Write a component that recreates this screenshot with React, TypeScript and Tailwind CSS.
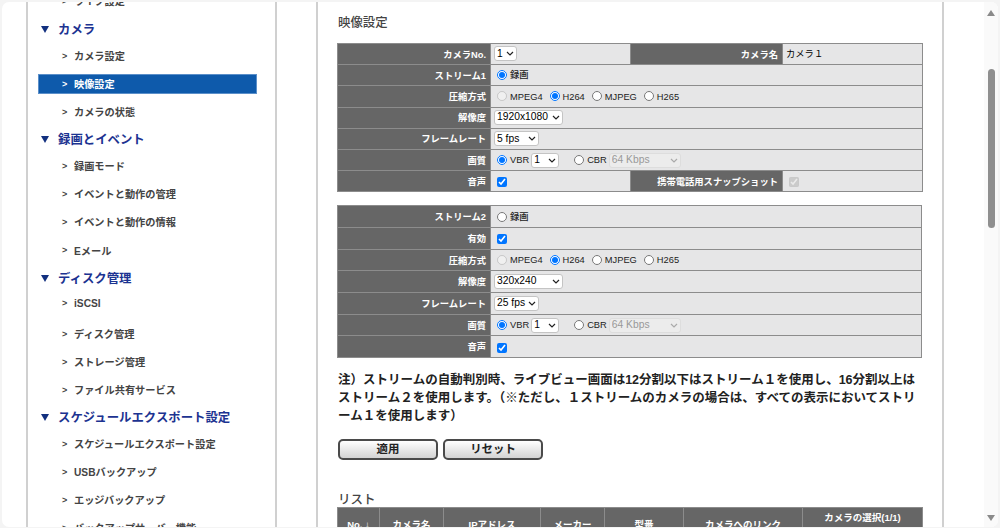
import React from "react";

const FONT = "[font-family:'Liberation_Sans','Noto_Sans_CJK_JP',sans-serif]";

function Item({ text, active, h }: { text: string; active?: boolean; h?: string }) {
  return (
    <div className={`flex items-center ${h ?? "h-[28.1px]"} ${active ? "pb-[1px]" : ""}`}>
      <div
        className={`flex items-center w-[219px] text-[10.2px] font-bold ${
          active
            ? "h-[19.5px] pt-[1px] pl-[23px] bg-[#0e5aab] border border-[#5b8fc9] text-white"
            : "h-[20px] pl-[24px] text-[#444444]"
        }`}
      >
        <span className="w-[12px] text-[9px]">&gt;</span>
        <span>{text}</span>
      </div>
    </div>
  );
}

function Section({ text }: { text: string }) {
  return (
    <div className="flex items-center h-[26px] pt-[1.5px] pl-[3px] text-[12.4px] font-bold text-[#1c3391]">
      <svg width="8" height="7" viewBox="0 0 8 7" className="mr-[9px] -mt-[2px]">
        <path d="M0 0H8L4 7Z" fill="#12307f" />
      </svg>
      <span>{text}</span>
    </div>
  );
}

function Sidebar() {
  return (
    <aside className="ml-[24px] w-[251px] shrink-0 border-x-2 border-[#d0d0d0] pl-[10px] overflow-hidden">
      <div className="-mt-[13.5px]">
        <Item text="ライブ設定" h="h-[28.1px] pb-[2px]" />
        <Section text="カメラ" />
        <Item text="カメラ設定" />
        <Item text="映像設定" active />
        <Item text="カメラの状態" />
        <Section text="録画とイベント" />
        <Item text="録画モード" />
        <Item text="イベントと動作の管理" />
        <Item text="イベントと動作の情報" />
        <Item text="Eメール" />
        <Section text="ディスク管理" />
        <Item text="iSCSI" h="h-[25px] pb-[1px]" />
        <div className="h-[4px]" />
        <Item text="ディスク管理" />
        <Item text="ストレージ管理" />
        <Item text="ファイル共有サービス" />
        <Section text="スケジュールエクスポート設定" />
        <Item text="スケジュールエクスポート設定" />
        <Item text="USBバックアップ" />
        <Item text="エッジバックアップ" />
        <Item text="バックアップサーバー機能" />
      </div>
    </aside>
  );
}

const th = "bg-[#666666] border border-[#8c8c8c] text-white text-right font-bold text-[9.3px] pr-[4px] pt-[3px] pb-0 pl-0";
const td = "bg-[#e6e6e7] border border-[#8c8c8c] text-left font-normal text-black text-[9.3px] pl-[3px] p-0";
const tdLow = "bg-[#e6e6e7] border border-[#8c8c8c] text-left font-normal text-black text-[9.3px] pl-[3px] pt-[2px] pb-0 pr-0";
const sel =
  "appearance-none bg-white border border-[#c4c4c4] rounded-[3px] text-[10.3px] text-black h-[15px] leading-none pl-[2px] block";

function Select({ w, value, disabled }: { w: string; value: string; disabled?: boolean }) {
  return (
    <span className={`relative inline-block ${w}`}>
      <select
        disabled={disabled}
        className={`${sel} w-full ${disabled ? "!bg-[#ececec] !text-[#999999] !border-[#dddddd]" : ""}`}
      >
        <option>{value}</option>
      </select>
      <svg width="8" height="5" viewBox="0 0 8 5" className="absolute right-[3px] top-[5px] pointer-events-none">
        <path d="M1 1L4 4L7 1" fill="none" stroke={disabled ? "#aaaaaa" : "#222222"} strokeWidth="1.2" />
      </svg>
    </span>
  );
}

function Radio({ on, off, label }: { on?: boolean; off?: boolean; label: string }) {
  return (
    <label className="inline-flex items-center mr-[4px] font-medium text-[#222222]">
      <input type="radio" readOnly checked={!!on} disabled={off} className="w-[10px] h-[10px] m-0 mr-[3px] ml-[3px]" />
      <span className="pt-[2px]">{label}</span>
    </label>
  );
}

function Check({ disabled }: { disabled?: boolean }) {
  return <input type="checkbox" readOnly checked disabled={disabled} className="w-[10px] h-[10px] m-0 ml-[3px] block" />;
}

function Codec() {
  return (
    <>
      <Radio off label="MPEG4" />
      <Radio on label="H264" />
      <Radio label="MJPEG" />
      <Radio label="H265" />
    </>
  );
}

function Quality() {
  return (
    <div className="flex items-center">
      <Radio on label="VBR" />
      <span className="-ml-[2px] mr-[15px] flex">
        <Select w="w-[28px]" value="1" />
      </span>
      <label className="inline-flex items-center font-medium text-[#222222]">
        <input type="radio" readOnly checked={false} className="w-[10px] h-[10px] m-0 mr-[3px]" />
        <span className="pt-[2px]">CBR</span>
      </label>
      <span className="ml-[2px] flex">
        <Select w="w-[72px]" value="64 Kbps" disabled />
      </span>
    </div>
  );
}

function Settings1() {
  const rowH = "h-[21.2px]";
  return (
    <table className="w-[585px] border-collapse table-fixed">
      <colgroup>
        <col className="w-[153px]" />
        <col className="w-[140px]" />
        <col className="w-[152px]" />
        <col className="w-[140px]" />
      </colgroup>
      <tbody>
        <tr className={rowH}>
          <th className={th}>カメラNo.</th>
          <td className={td}><Select w="w-[23px]" value="1" /></td>
          <th className={th}>カメラ名</th>
          <td className={`${tdLow} font-medium`}>カメラ１</td>
        </tr>
        <tr className={rowH}>
          <th className={th}>ストリーム1</th>
          <td className={tdLow} colSpan={3}><Radio on label="録画" /></td>
        </tr>
        <tr className={rowH}>
          <th className={th}>圧縮方式</th>
          <td className={tdLow} colSpan={3}><Codec /></td>
        </tr>
        <tr className={rowH}>
          <th className={th}>解像度</th>
          <td className={td} colSpan={3}><Select w="w-[69px]" value="1920x1080" /></td>
        </tr>
        <tr className={rowH}>
          <th className={th}>フレームレート</th>
          <td className={td} colSpan={3}><Select w="w-[45px]" value="5 fps" /></td>
        </tr>
        <tr className={rowH}>
          <th className={th}>画質</th>
          <td className={td} colSpan={3}><Quality /></td>
        </tr>
        <tr className={rowH}>
          <th className={th}>音声</th>
          <td className={tdLow}><Check /></td>
          <th className={th}>携帯電話用スナップショット</th>
          <td className={tdLow}><Check disabled /></td>
        </tr>
      </tbody>
    </table>
  );
}

function Settings2() {
  const rowH = "h-[21.7px]";
  return (
    <table className="w-[585px] border-collapse table-fixed mt-[13px]">
      <colgroup>
        <col className="w-[153px]" />
        <col />
      </colgroup>
      <tbody>
        <tr className={rowH}>
          <th className={th}>ストリーム2</th>
          <td className={tdLow}><Radio label="録画" /></td>
        </tr>
        <tr className={rowH}>
          <th className={th}>有効</th>
          <td className={tdLow}><Check /></td>
        </tr>
        <tr className={rowH}>
          <th className={th}>圧縮方式</th>
          <td className={tdLow}><Codec /></td>
        </tr>
        <tr className={rowH}>
          <th className={th}>解像度</th>
          <td className={td}><Select w="w-[69px]" value="320x240" /></td>
        </tr>
        <tr className={rowH}>
          <th className={th}>フレームレート</th>
          <td className={td}><Select w="w-[45px]" value="25 fps" /></td>
        </tr>
        <tr className={rowH}>
          <th className={th}>画質</th>
          <td className={td}><Quality /></td>
        </tr>
        <tr className={rowH}>
          <th className={th}>音声</th>
          <td className={tdLow}><Check /></td>
        </tr>
      </tbody>
    </table>
  );
}

const btn =
  "w-[100px] h-[21px] rounded-[5px] border-2 border-[#4a4a4a] bg-gradient-to-b from-white to-[#d4d4d4] text-[11.4px] font-bold text-[#222222] flex items-center justify-center";

const listTh = "bg-[#666666] border border-[#8c8c8c] text-white text-center font-bold text-[9.5px] align-middle p-0";

function ListTable() {
  return (
    <table className="w-[585px] border-collapse table-fixed mt-[1px]">
      <colgroup>
        <col className="w-[42px]" />
        <col className="w-[64px]" />
        <col className="w-[97px]" />
        <col className="w-[64px]" />
        <col className="w-[79px]" />
        <col className="w-[119px]" />
        <col className="w-[120px]" />
      </colgroup>
      <thead>
        <tr className="h-[34px]">
          <th className={listTh}>No. ↓</th>
          <th className={listTh}>カメラ名</th>
          <th className={listTh}>IPアドレス</th>
          <th className={listTh}>メーカー</th>
          <th className={listTh}>型番</th>
          <th className={listTh}>カメラへのリンク</th>
          <th className={listTh}>
            <div className="flex flex-col items-center gap-[3px]">
              <span>カメラの選択(1/1)</span>
              <input type="checkbox" readOnly checked className="w-[10px] h-[10px] m-0 ml-[18px]" />
            </div>
          </th>
        </tr>
      </thead>
    </table>
  );
}

function Main() {
  return (
    <main className="ml-[39px] w-[628px] shrink-0 border-x-2 border-[#d0d0d0] pl-[19px] overflow-hidden">
      <h2 className="text-[12.4px] font-medium text-[#444444] leading-none pt-[15px] pl-[1px] h-[41px]">映像設定</h2>
      <Settings1 />
      <Settings2 />
      <p className="mt-[13px] w-[581px] pl-[1px] text-[12.5px] font-bold leading-[18px] text-[#222222]">
        注）ストリームの自動判別時、ライブビュー画面は12分割以下はストリーム１を使用し、16分割以上はストリーム２を使用します。（※ただし、１ストリームのカメラの場合は、すべての表示においてストリーム１を使用します）
      </p>
      <div className="flex gap-[5px] mt-[14px] pl-[1px]">
        <button className={btn}>適用</button>
        <button className={btn}>リセット</button>
      </div>
      <h3 className="mt-[34px] pl-[1px] text-[12.5px] font-medium text-[#444444] leading-[12px]">リスト</h3>
      <ListTable />
    </main>
  );
}

function Scrollbar() {
  return (
    <div className="ml-auto w-[14px] shrink-0 bg-[#fafafa] flex flex-col items-center pt-[8px] pb-[6px]">
      <svg width="8" height="6" viewBox="0 0 8 6"><path d="M4 0L8 6H0Z" fill="#8a8a8a" /></svg>
      <div className="w-[7px] h-[159px] mt-[53px] rounded-full bg-[#8f8f8f]" />
      <svg width="8" height="6" viewBox="0 0 8 6" className="mt-auto"><path d="M0 0H8L4 6Z" fill="#8a8a8a" /></svg>
    </div>
  );
}

export default function App() {
  return (
    <div className={`${FONT} w-[1000px] h-[528px] overflow-hidden bg-[#f4f4f4] pt-[2px] px-[2px] pb-[1px] antialiased`}>
      <div className="h-full flex bg-white rounded-[7px] overflow-hidden">
        <Sidebar />
        <Main />
        <Scrollbar />
      </div>
    </div>
  );
}
